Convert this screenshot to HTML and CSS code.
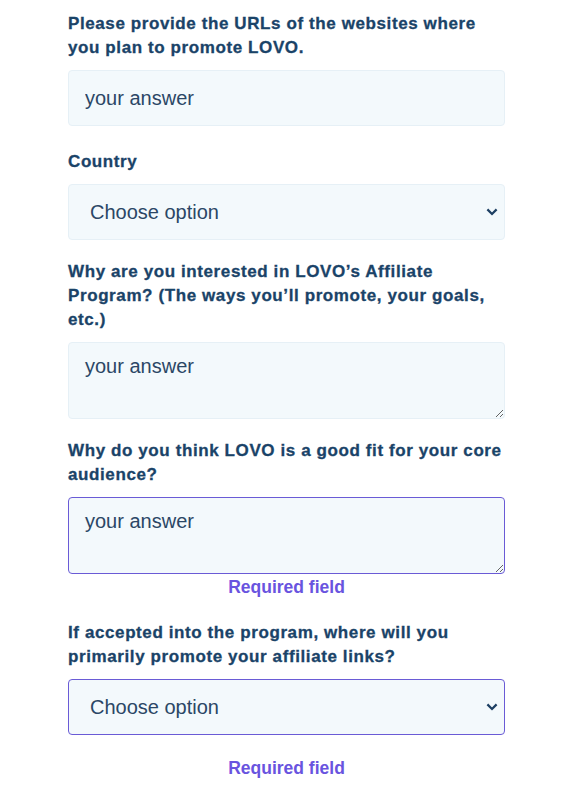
FILE: index.html
```html
<!DOCTYPE html>
<html lang="en">
<head>
<meta charset="utf-8">
<title>LOVO Affiliate form</title>
<link rel="stylesheet" href="styles.css">
</head>
<body>
<form class="form">
  <div class="field field-first">
    <label class="label" for="urls">Please provide the URLs of the websites where you plan to promote LOVO.</label>
    <input class="control" id="urls" type="text" placeholder="your answer">
  </div>
  <div class="field">
    <label class="label" for="country">Country</label>
    <div class="select-wrap">
      <select class="control select" id="country"><option>Choose option</option></select>
      <svg class="chevron" width="12" height="8" viewBox="0 0 12 8"><path d="M1.4 1.4 L6 6 L10.6 1.4" fill="none" stroke="#1d3f63" stroke-width="2.2"/></svg>
    </div>
  </div>
  <div class="field">
    <label class="label" for="why">Why are you interested in LOVO’s Affiliate Program? (The ways you’ll promote, your goals, etc.)</label>
    <textarea class="control area" id="why" placeholder="your answer"></textarea>
  </div>
  <div class="field field-tight">
    <label class="label" for="fit">Why do you think LOVO is a good fit for your core audience?</label>
    <textarea class="control area invalid" id="fit" placeholder="your answer"></textarea>
    <div class="error error-area">Required field</div>
  </div>
  <div class="field">
    <label class="label" for="where">If accepted into the program, where will you primarily promote your affiliate links?</label>
    <div class="select-wrap">
      <select class="control select invalid" id="where"><option>Choose option</option></select>
      <svg class="chevron" width="12" height="8" viewBox="0 0 12 8"><path d="M1.4 1.4 L6 6 L10.6 1.4" fill="none" stroke="#1d3f63" stroke-width="2.2"/></svg>
    </div>
    <div class="error error-select">Required field</div>
  </div>
</form>
</body>
</html>
```
FILE: styles.css
```css
html, body {
  margin: 0;
  padding: 0;
  background: #ffffff;
}

.form {
  width: 437px;
  padding: 12px 60px 0 68px;
  font-family: "Liberation Sans", Arial, sans-serif;
}

.field {
  margin-bottom: 20px;
}

.field-first {
  margin-bottom: 24px;
}

.field-tight {
  margin-bottom: 24px;
}

.label {
  display: block;
  font-weight: 700;
  font-size: 17px;
  line-height: 24px;
  letter-spacing: 0.6px;
  color: #1a4368;
  -webkit-text-stroke: 0.3px #1a4368;
  margin-bottom: 10px;
}

.control {
  display: block;
  box-sizing: border-box;
  width: 437px;
  height: 56px;
  margin: 0;
  border: 1px solid #e6f0f6;
  border-radius: 4px;
  background: #f3f9fc;
  padding: 0 16px;
  font-family: "Liberation Sans", Arial, sans-serif;
  font-size: 20px;
  color: #2b4766;
  outline: none;
}

.control::placeholder {
  color: #2b4766;
  opacity: 1;
}

.area {
  height: 77px;
  padding: 12px 16px;
  resize: vertical;
}

.select {
  -webkit-appearance: none;
  appearance: none;
  padding-left: 21px;
}

.select-wrap {
  position: relative;
}

.chevron {
  position: absolute;
  right: 7px;
  top: 24px;
  pointer-events: none;
}

.invalid {
  border-color: #6a5bd6;
}

.error {
  font-weight: 700;
  font-size: 17.5px;
  line-height: 20px;
  color: #6954df;
  text-align: center;
}

.error-area {
  margin-top: 3px;
}

.error-select {
  margin-top: 23px;
}
```
